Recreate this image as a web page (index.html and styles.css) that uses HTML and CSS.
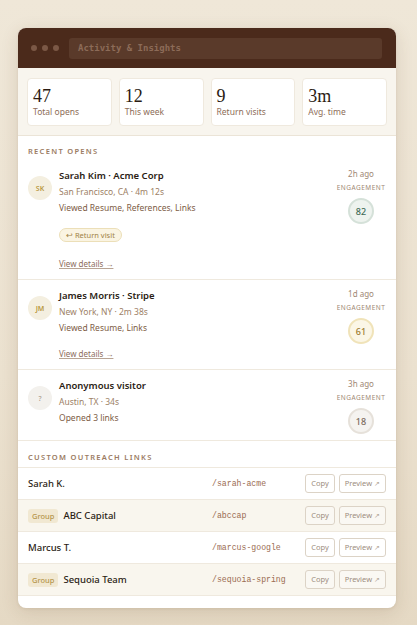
FILE: index.html
```html
<!DOCTYPE html>
<html>
<head>
<meta charset="utf-8">
<link rel="stylesheet" href="styles.css">
</head>
<body>
<div class="card">
  <div class="titlebar">
    <div class="dots"><span></span><span></span><span></span></div>
    <div class="addr">Activity &amp; Insights</div>
  </div>
  <div class="stats">
    <div class="stat"><div class="num">47</div><div class="lbl">Total opens</div></div>
    <div class="stat"><div class="num">12</div><div class="lbl">This week</div></div>
    <div class="stat"><div class="num">9</div><div class="lbl">Return visits</div></div>
    <div class="stat"><div class="num">3m</div><div class="lbl">Avg. time</div></div>
  </div>

  <div class="section-label">Recent opens</div>

  <div class="open">
    <div class="avatar">SK</div>
    <div class="info">
      <div class="name">Sarah Kim · Acme Corp</div>
      <div class="meta">San Francisco, CA · 4m 12s</div>
      <div class="viewed">Viewed Resume, References, Links</div>
      <div class="pill">↩ Return visit</div>
      <div class="details">View details →</div>
    </div>
    <div class="side">
      <div class="ago">2h ago</div>
      <div class="eng">ENGAGEMENT</div>
      <div class="score high">82</div>
    </div>
  </div>

  <div class="open">
    <div class="avatar">JM</div>
    <div class="info">
      <div class="name">James Morris · Stripe</div>
      <div class="meta">New York, NY · 2m 38s</div>
      <div class="viewed">Viewed Resume, Links</div>
      <div class="details d2">View details →</div>
    </div>
    <div class="side">
      <div class="ago">1d ago</div>
      <div class="eng">ENGAGEMENT</div>
      <div class="score mid">61</div>
    </div>
  </div>

  <div class="open">
    <div class="avatar anon">?</div>
    <div class="info">
      <div class="name">Anonymous visitor</div>
      <div class="meta">Austin, TX · 34s</div>
      <div class="viewed">Opened 3 links</div>
    </div>
    <div class="side">
      <div class="ago">3h ago</div>
      <div class="eng">ENGAGEMENT</div>
      <div class="score low">18</div>
    </div>
  </div>

  <div class="section-label links-label">Custom outreach links</div>

  <div class="links">
    <div class="link">
      <div class="lname">Sarah K.</div>
      <div class="slug">/sarah-acme</div>
      <div class="btns"><span class="btn">Copy</span><span class="btn">Preview <i>↗</i></span></div>
    </div>
    <div class="link group">
      <div class="lname"><span class="badge">Group</span>ABC Capital</div>
      <div class="slug">/abccap</div>
      <div class="btns"><span class="btn">Copy</span><span class="btn">Preview <i>↗</i></span></div>
    </div>
    <div class="link">
      <div class="lname">Marcus T.</div>
      <div class="slug">/marcus-google</div>
      <div class="btns"><span class="btn">Copy</span><span class="btn">Preview <i>↗</i></span></div>
    </div>
    <div class="link group">
      <div class="lname"><span class="badge">Group</span>Sequoia Team</div>
      <div class="slug">/sequoia-spring</div>
      <div class="btns"><span class="btn">Copy</span><span class="btn">Preview <i>↗</i></span></div>
    </div>
  </div>
</div>
</body>
</html>
```

FILE: styles.css
```css
* { box-sizing: border-box; }
html, body { margin: 0; padding: 0; }
body {
  background: linear-gradient(180deg, #efe7d8 0%, #ebe1cf 60%, #e5d9c4 100%);
  min-height: 625px;
  font-family: "Noto Sans", "Liberation Sans", sans-serif;
  padding: 28px 21px 18px 18px;
}
.card {
  background: #fff;
  border-radius: 8px;
  overflow: hidden;
  box-shadow: 0 4px 18px rgba(90, 60, 30, 0.14), 0 1px 3px rgba(90, 60, 30, 0.08);
  padding-bottom: 12px;
}
.titlebar {
  height: 40px;
  background: #4b2a1b;
  display: flex;
  align-items: center;
  padding: 0 14px 0 13px;
  gap: 10px;
}
.dots { display: flex; gap: 5px; }
.dots span { width: 6px; height: 6px; border-radius: 50%; background: #7b5846; }
.addr {
  flex: 1;
  height: 21px;
  background: #5a3a2a;
  border-radius: 3px;
  padding-left: 9px;
  display: flex;
  align-items: center;
  font-family: "DejaVu Sans Mono", "Liberation Mono", monospace;
  font-size: 9px;
  font-weight: bold;
  color: #8c6b58;
}
.stats {
  background: #f8f5ee;
  padding: 10px 9px 9px;
  display: grid;
  grid-template-columns: repeat(4, 1fr);
  gap: 7px;
  border-bottom: 1px solid #ebe4d7;
}
.stat {
  background: #fff;
  border: 1px solid #efe9de;
  border-radius: 4px;
  padding: 7px 5px 7px;
}
.num {
  font-family: "Liberation Serif", "DejaVu Serif", serif;
  font-size: 18px;
  line-height: 20px;
  color: #2b1b12;
}
.lbl {
  font-size: 8.5px;
  line-height: 12px;
  color: #8d6d58;
}
.section-label {
  font-size: 7.5px;
  line-height: 12px;
  letter-spacing: 1.3px;
  text-transform: uppercase;
  color: #9b7b62;
  font-weight: 600;
  padding: 9px 10px 3px;
}
.open {
  display: flex;
  align-items: flex-start;
  padding: 8px 6px 4px 10px;
  border-bottom: 1px solid #efe9de;
}
.avatar {
  width: 24px;
  height: 24px;
  border-radius: 50%;
  background: #f4efe0;
  color: #b8983e;
  font-size: 7px;
  font-weight: 600;
  display: flex;
  align-items: center;
  justify-content: center;
  margin-top: 8px;
  margin-right: 7px;
  flex-shrink: 0;
}
.avatar.anon { background: #f3f1ed; color: #a39384; font-weight: 400; }
.info { flex: 1; padding-bottom: 3px; }
.name {
  font-size: 9.5px;
  line-height: 16px;
  font-weight: 600;
  color: #2b1d14;
}
.meta, .viewed {
  font-size: 8.5px;
  line-height: 16px;
  color: #9d7f66;
}
.viewed { color: #7d5c45; }
.pill {
  display: inline-block;
  margin-top: 12px;
  height: 14px;
  line-height: 12px;
  padding: 0 6px;
  border-radius: 7px;
  background: #faf4e2;
  border: 1px solid #ecdfb8;
  color: #a08244;
  font-size: 7.5px;
}
.details {
  margin-top: 13px;
  font-size: 8px;
  line-height: 16px;
  color: #8d6d5b;
  text-decoration: underline;
  text-decoration-color: #b8a494;
}
.details.d2 { margin-top: 10px; }
.side {
  width: 58px;
  display: flex;
  flex-direction: column;
  align-items: center;
  padding-bottom: 2px;
}
.ago { font-size: 8px; line-height: 12px; color: #a08874; }
.eng {
  font-size: 6.5px;
  line-height: 10px;
  letter-spacing: 0.5px;
  color: #a08874;
  margin-top: 3px;
}
.score {
  margin-top: 5px;
  width: 26px;
  height: 26px;
  border-radius: 50%;
  display: flex;
  align-items: center;
  justify-content: center;
  font-size: 9px;
  font-weight: 500;
}
.score.high { background: #eef3ef; border: 2px solid #d5e1d9; color: #3f6b56; }
.score.mid { background: #fbf6e6; border: 2px solid #f0e3b9; color: #9c7b31; }
.score.low { background: #f5f3f0; border: 2px solid #e6e1da; color: #7a6a5c; }
.links-label {
  padding: 10px 10px 4px;
  border-bottom: 1px solid #efe9de;
}
.link {
  display: grid;
  grid-template-columns: 184px 1fr auto;
  align-items: center;
  height: 32px;
  padding: 0 10px;
  border-bottom: 1px solid #efe9de;
}
.link.group { background: #f9f6ee; }
.lname {
  display: flex;
  align-items: center;
  font-size: 9.5px;
  font-weight: 500;
  color: #2b1d14;
}
.badge {
  display: inline-block;
  height: 14px;
  line-height: 14px;
  padding: 0 4px;
  margin-right: 5px;
  border-radius: 3px;
  background: #f1e8d2;
  color: #b6964c;
  font-size: 7.5px;
  font-weight: 500;
}
.slug {
  font-family: "Liberation Mono", "DejaVu Sans Mono", monospace;
  font-size: 8.2px;
  color: #9b6c52;
}
.btns { display: flex; gap: 4px; }
.btn {
  height: 19px;
  line-height: 17px;
  padding: 0 5px;
  border: 1px solid #dcd3c6;
  border-radius: 3px;
  background: #fff;
  color: #9d8d7e;
  font-size: 7.5px;
}
.group .btn { background: #faf8f3; }
.btn i { font-style: normal; font-size: 6.5px; color: #b5a798; }
```
